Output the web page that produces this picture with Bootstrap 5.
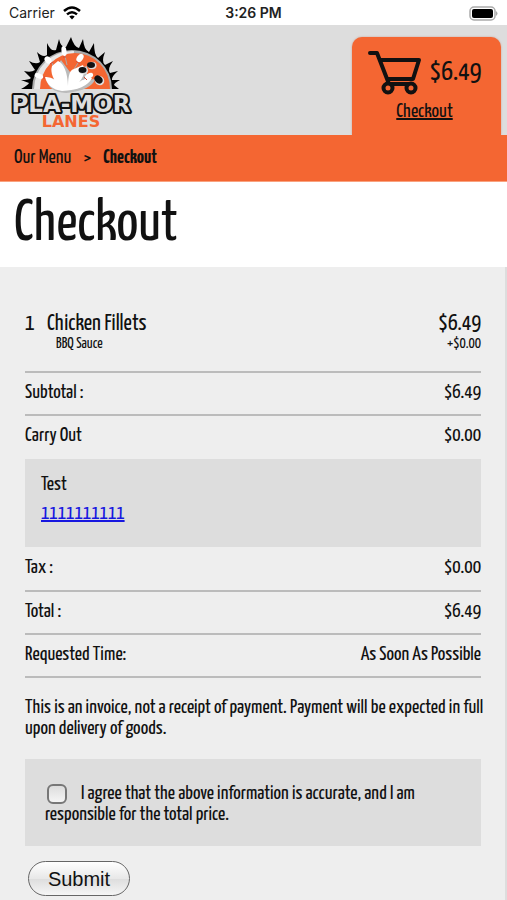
<!DOCTYPE html>
<html lang="en">
<head>
<meta charset="utf-8">
<meta name="viewport" content="width=device-width, initial-scale=1">
<title>Checkout - Pla-Mor Lanes</title>
<link rel="stylesheet" href="https://cdn.jsdelivr.net/npm/bootstrap@5.3.0/dist/css/bootstrap.min.css">
<style>
body { font-family: "Yanone Kaffeesatz", "Liberation Sans Narrow", "Liberation Sans", sans-serif; font-size: 20px; line-height: 21px; color: #111; background: #eee; }
.status-bar { height: 25px; padding: 0 9px; background: #fff; font: 14px/26px Inter, sans-serif; color: #222; }
.site-header { height: 110px; background: #ddd; padding: 0 6px 0 8px; }
.site-logo { margin-top: 10px; }
.cart-tab { width: 149px; height: 98px; background: #f46632; border-radius: 10px 10px 0 0; box-shadow: 0 0 2px #c98; padding: 13px 4px 0 0; clip-path: inset(-4px -4px 0 -4px); }
.cart-total { font-size: 28px; }
.cart-tab a { display: inline-block; margin-top: 6px; }
.crumbs { height: 47px; gap: 12px; background: #f46632; padding: 0 14px 2px; border-bottom: 1px solid #f9a27f; }
.page-title { height: 85px; background: #fff; padding: 1px 14px 0; font-size: 58px; line-height: 1; font-weight: 400; }
.order { padding: 45px 24px 4px 25px; border-right: 2px solid #ddd; }
.item-line { font-size: 23px; line-height: 24px; }
.item-line .qty { width: 22px; }
.option-line { font-size: 15px; line-height: 16px; padding-left: 31px; }
.item { padding-bottom: 19px; }
.sum-row { min-height: 43px; border-top: 2px solid #bbb; padding-bottom: 3px; }
.contact { background: #ddd; height: 88px; padding: 15px 16px; margin-top: 2px; }
.contact a { color: #1717e0; }
.invoice-note { border-top: 2px solid #bbb; }
.invoice-note p { padding-top: 19px; margin: 0 -8px 20px 0; }
.agree { background: #ddd; padding: 24px 20px 21px; }
.agree input { appearance: none; width: 20px; height: 20px; margin: 0 14px 0 2px; border: 2px solid #777; border-radius: 6px; background: linear-gradient(#ddd, #f5f5f5); vertical-align: middle; }
.agree input:checked { background: #555; }
.submit-btn { width: 102px; height: 35px; margin: 15px 0 0 3px; border: 1px solid #666; border-radius: 18px; background: linear-gradient(#fff, #e8e8e8 50%, #ddd 51%, #f5f5f5); font: 20px/1 "Liberation Sans", sans-serif; color: #111; }
</style>
<script src="https://cdn.jsdelivr.net/npm/bootstrap@5.3.0/dist/js/bootstrap.bundle.min.js"></script>
</head>
<body>
<div class="status-bar row g-0">
  <div class="col d-flex align-items-center gap-2"><span>Carrier</span>
    <svg width="18" height="14" viewBox="0 0 18 14" fill="none" stroke="#000" stroke-width="2.5" aria-hidden="true"><path d="M1 5Q9-2 17 5M4 8.400Q9 4 14 8.400"/><path d="M6.300 10.600Q9 8.400 11.700 10.600L9 13.500Z" fill="#000" stroke="none"/></svg>
  </div>
  <div class="col-auto fw-semibold">3:26 PM</div>
  <div class="col d-flex align-items-center justify-content-end">
    <svg width="29" height="15" viewBox="0 0 29 15" aria-hidden="true"><rect x="1" y="1" width="25" height="13" rx="4" fill="#fff" stroke="#aaa" stroke-width="1.500"/><rect x="3" y="3" width="21" height="9" rx="2"/><path d="M27 5Q30 7.500 27 10Z" fill="#aaa"/></svg>
  </div>
</div>
<header class="site-header d-flex justify-content-between">
  <a href="#" class="site-logo" aria-label="Pla-Mor Lanes">
    <svg width="126" height="98" viewBox="8 35 126 98">
      <path d="M21 89Q28 85 29 83L21 80Q29 80 31 78L24 71Q31 73 35 70L29 61Q36 65 40 62L37 52Q43 58 47 55L47 43Q51 52 56 50L59 39Q61 48 66 47L71 37Q74 47 79 48L83 39Q84 50 89 52L94 43Q94 55 98 58L105 52Q101 62 105 65L113 61Q107 69 110 73L118 71Q111 77 112 80L120 80Q114 83 114 85L119 89Z"/>
      <path d="M32 89A40 39 0 0 1 112 89Z" fill="#aaa"/>
      <path d="M34 89A39 38 0 0 1 74 51L72 89Z" fill="#e8e8e8"/>
      <path d="M40 89A35 36 0 0 1 110 89Z" fill="#f46632"/>
      <path d="M66 93Q48 92 46 78L57 79 62 88 53 72 61 60 70 72 71 84 75 70 87 66 87 77 80 87 87 80 95 79Q92 90 66 93Z" fill="#bbb"/>
      <path d="M52 63L55 70M65 56L67 65M78 63L74 69M83 80L87 78" stroke="#aaa"/>
      <g fill="#fff"><path d="M62 91Q48 89 45 77 55 76 61 88 49 76 52 66L58 61Q67 65 68 86 68 70 74 69L83 65Q88 76 73 88 82 77 92 78 86 90 62 91Z"/>
        <ellipse cx="48" cy="60" rx="3" ry="4" transform="rotate(-40 48 60)"/><ellipse cx="64" cy="51" rx="2.500" ry="5" transform="rotate(-8 64 51)"/><ellipse cx="80" cy="58" rx="3" ry="4.500" transform="rotate(35 80 58)"/><ellipse cx="39" cy="76" rx="4.500" ry="2.500" transform="rotate(20 39 76)"/><ellipse cx="89" cy="76" rx="4.500" ry="2.500" transform="rotate(-28 89 76)"/></g>
      <path d="M50 64L53 62M63 57H66M76 61L80 64M44 76V79M84 77L87 80" stroke="#d54b35"/>
      <g fill="#ddd"><ellipse cx="83.500" cy="70.500" rx="4.500" ry="3.700"/><ellipse cx="92" cy="65.500" rx="4.500" ry="3.700"/><ellipse cx="99.500" cy="80.500" rx="5" ry="4.500" transform="rotate(45 99.500 80.500)"/></g>
      <g fill="#111"><ellipse cx="82.500" cy="70" rx="4" ry="3"/><ellipse cx="91" cy="65" rx="4" ry="3"/><ellipse cx="98.500" cy="79.500" rx="4.500" ry="3.500" transform="rotate(45 98.500 79.500)"/></g>
      <text x="71" y="112" text-anchor="middle" font-family="DejaVu Sans, sans-serif" font-weight="700" font-size="23" fill="#ddd" stroke="#111" stroke-width="4" stroke-linejoin="round" paint-order="stroke">PLA-MOR</text>
      <text x="71" y="127" text-anchor="middle" font-family="DejaVu Sans, sans-serif" font-weight="700" font-size="16" fill="#f46632">LANES</text>
    </svg>
  </a>
  <div class="cart-tab align-self-end text-center">
    <div class="d-flex justify-content-center align-items-center gap-2">
      <svg width="54" height="45" viewBox="0 0 54 45" fill="none" stroke="#111" stroke-width="4" stroke-linecap="round" stroke-linejoin="round" aria-hidden="true"><path d="M2 3H9L21 34H43M13 10H51L45 29H19"/><circle cx="20" cy="38" r="4.500" fill="#f46632"/><circle cx="43" cy="38" r="4.500" fill="#f46632"/></svg>
      <span class="cart-total">$6.49</span>
    </div>
    <a href="#" class="text-reset">Checkout</a>
  </div>
</header>
<nav class="crumbs d-flex align-items-center" aria-label="Breadcrumb">
  <a href="#" class="text-reset text-decoration-none">Our Menu</a><span>&gt;</span><strong>Checkout</strong>
</nav>
<h1 class="page-title d-flex align-items-center m-0">Checkout</h1>
<main class="order">
  <div class="item">
    <div class="item-line d-flex"><span class="qty">1</span><span class="flex-grow-1">Chicken Fillets</span><span>$6.49</span></div>
    <div class="option-line d-flex justify-content-between"><span>BBQ Sauce</span><span>+$0.00</span></div>
  </div>
  <div class="sum-row d-flex align-items-center justify-content-between"><span>Subtotal :</span><span>$6.49</span></div>
  <div class="sum-row d-flex align-items-center justify-content-between"><span>Carry Out</span><span>$0.00</span></div>
  <div class="contact"><div class="mb-2">Test</div><a href="tel:1111111111">1111111111</a></div>
  <div class="sum-row border-0 d-flex align-items-center justify-content-between"><span>Tax :</span><span>$0.00</span></div>
  <div class="sum-row d-flex align-items-center justify-content-between"><span>Total :</span><span>$6.49</span></div>
  <div class="sum-row d-flex align-items-center justify-content-between"><span>Requested Time:</span><span>As Soon As Possible</span></div>
  <div class="invoice-note"><p>This is an invoice, not a receipt of payment. Payment will be expected in full upon delivery of goods.</p></div>
  <form>
    <div class="agree"><input type="checkbox" id="agree"><label class="d-inline" for="agree">I agree that the above information is accurate, and I am responsible for the total price.</label></div>
    <button type="button" class="submit-btn">Submit</button>
  </form>
</main>
</body>
</html>
